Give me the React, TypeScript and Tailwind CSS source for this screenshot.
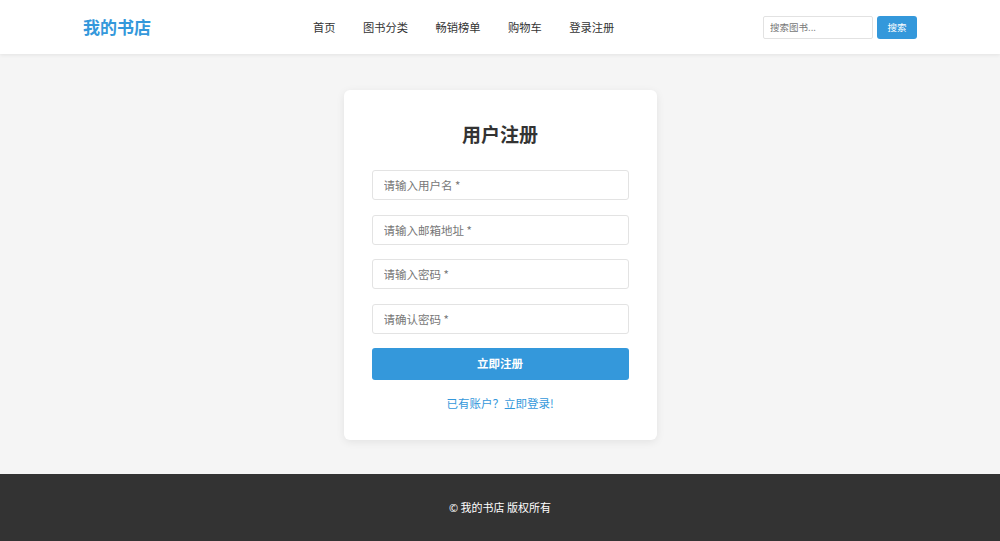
const font = { fontFamily: '"Noto Sans CJK SC", "Noto Sans", sans-serif' };

const NAV = ["首页", "图书分类", "畅销榜单", "购物车", "登录注册"];

const FIELDS = ["请输入用户名 *", "请输入邮箱地址 *", "请输入密码 *", "请确认密码 *"];

function Header() {
  return (
    <header className="h-[54px] bg-white shadow-[0_1px_4px_rgba(0,0,0,0.08)] relative z-10">
      <div className="w-[834px] mx-auto h-full flex items-center">
        <div className="text-[17px] font-bold text-[#3498db] w-[230px]">我的书店</div>
        <nav className="flex gap-[27.5px] text-[11.25px] text-[#333] pt-[1px]">
          {NAV.map((n) => (
            <a key={n} href="#" className="leading-none">
              {n}
            </a>
          ))}
        </nav>
        <div className="ml-auto flex items-center gap-[4px]">
          <input
            type="text"
            placeholder="搜索图书..."
            className="w-[110px] h-[23px] border border-[#e2e2e2] rounded-[2px] px-[6px] text-[9.5px] placeholder:text-[#777] outline-none"
          />
          <button className="w-[40px] h-[23px] bg-[#3498db] text-white text-[9.5px] rounded-[3px]">
            搜索
          </button>
        </div>
      </div>
    </header>
  );
}

function RegisterCard() {
  return (
    <div className="w-[313px] bg-white rounded-[6px] shadow-[0_2px_8px_rgba(0,0,0,0.08)] px-[28px] pt-[30px] pb-[28px]">
      <h2 className="text-[19px] font-bold text-[#333] text-center leading-[28px]">用户注册</h2>
      <form className="mt-[22px] flex flex-col gap-[14.5px]">
        {FIELDS.map((f) => (
          <input
            key={f}
            type="text"
            placeholder={f}
            className="h-[30px] w-full border border-[#e3e3e3] rounded-[3px] px-[11px] text-[11.5px] placeholder:text-[#777] outline-none"
          />
        ))}
        <button
          type="button"
          className="mt-[-0.5px] h-[32px] w-full bg-[#3498db] text-white text-[11.5px] font-bold rounded-[3px]"
        >
          立即注册
        </button>
      </form>
      <div className="mt-[14px] h-[18px] flex items-center justify-center">
        <a href="#" className="text-[11.5px] text-[#3498db] leading-[14px]">
          已有账户？立即登录!
        </a>
      </div>
    </div>
  );
}

export default function App() {
  return (
    <div className="min-h-[541px] flex flex-col bg-[#f5f5f5]" style={font}>
      <Header />
      <main className="h-[420px] flex justify-center items-start pt-[36px]">
        <RegisterCard />
      </main>
      <footer className="h-[67px] bg-[#333] flex items-center justify-center text-white text-[11px]">
        ©&nbsp;我的书店 版权所有
      </footer>
    </div>
  );
}
